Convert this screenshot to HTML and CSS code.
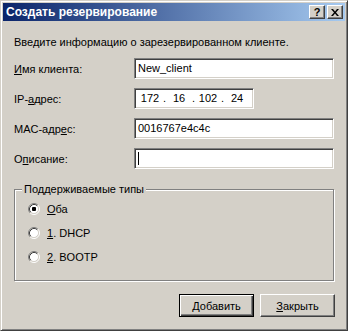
FILE: index.html
```html
<!DOCTYPE html>
<html lang="ru">
<head>
    <meta charset="UTF-8">
    <title>Создать резервирование</title>
    <link rel="stylesheet" href="styles.css">
</head>
<body>

    <div class="window">
        <div class="title-bar">
            <span class="title-text">Создать резервирование</span>
            <div class="caption-buttons">
                <button class="caption-btn help">?</button>
                <button class="caption-btn close">
                    <svg width="8" height="7" viewBox="0 0 8 7">
                        <path d="M0 0h2l2 2.5 2-2.5h2l-3 3.5 3 3.5h-2l-2-2.5-2 2.5h-2l3-3.5z" fill="#000"/>
                    </svg>
                </button>
            </div>
        </div>

        <div class="dialog-body">
            <p class="intro">Введите информацию о зарезервированном клиенте.</p>

            <div class="form-grid">
                <label class="field-label"><u>И</u>мя клиента:</label>
                <div class="text-input">New_client</div>

                <label class="field-label">IP-<u>а</u>дрес:</label>
                <div class="text-input ip-input">
                    <span class="octet">172</span><span class="dot">.</span>
                    <span class="octet">16</span><span class="dot">.</span>
                    <span class="octet">102</span><span class="dot">.</span>
                    <span class="octet">24</span>
                </div>

                <label class="field-label">MAC-адр<u>е</u>с:</label>
                <div class="text-input">0016767e4c4c</div>

                <label class="field-label">О<u>п</u>исание:</label>
                <div class="text-input"><span class="caret"></span></div>
            </div>

            <fieldset class="group-box">
                <legend>Поддерживаемые типы</legend>
                <div class="radio-row">
                    <svg class="radio" width="12" height="12" viewBox="0 0 12 12">
                        <circle cx="6" cy="6" r="4.5" fill="#fff"/>
                        <path d="M2.11 9.89A5.5 5.5 0 0 1 9.89 2.11" stroke="#808080" fill="none"/>
                        <path d="M9.89 2.11A5.5 5.5 0 0 1 2.11 9.89" stroke="#fff" fill="none"/>
                        <path d="M2.82 9.18A4.5 4.5 0 0 1 9.18 2.82" stroke="#404040" fill="none"/>
                        <path d="M9.18 2.82A4.5 4.5 0 0 1 2.82 9.18" stroke="#d4d0c8" fill="none"/>
                        <rect x="4" y="4" width="4" height="4" rx="1" fill="#000"/>
                    </svg>
                    <span><u>О</u>ба</span>
                </div>
                <div class="radio-row">
                    <svg class="radio" width="12" height="12" viewBox="0 0 12 12">
                        <circle cx="6" cy="6" r="4.5" fill="#fff"/>
                        <path d="M2.11 9.89A5.5 5.5 0 0 1 9.89 2.11" stroke="#808080" fill="none"/>
                        <path d="M9.89 2.11A5.5 5.5 0 0 1 2.11 9.89" stroke="#fff" fill="none"/>
                        <path d="M2.82 9.18A4.5 4.5 0 0 1 9.18 2.82" stroke="#404040" fill="none"/>
                        <path d="M9.18 2.82A4.5 4.5 0 0 1 2.82 9.18" stroke="#d4d0c8" fill="none"/>
                    </svg>
                    <span><u>1</u>. DHCP</span>
                </div>
                <div class="radio-row">
                    <svg class="radio" width="12" height="12" viewBox="0 0 12 12">
                        <circle cx="6" cy="6" r="4.5" fill="#fff"/>
                        <path d="M2.11 9.89A5.5 5.5 0 0 1 9.89 2.11" stroke="#808080" fill="none"/>
                        <path d="M9.89 2.11A5.5 5.5 0 0 1 2.11 9.89" stroke="#fff" fill="none"/>
                        <path d="M2.82 9.18A4.5 4.5 0 0 1 9.18 2.82" stroke="#404040" fill="none"/>
                        <path d="M9.18 2.82A4.5 4.5 0 0 1 2.82 9.18" stroke="#d4d0c8" fill="none"/>
                    </svg>
                    <span><u>2</u>. BOOTP</span>
                </div>
            </fieldset>

            <div class="button-row">
                <button class="push-btn default"><u>Д</u>обавить</button>
                <button class="push-btn"><u>З</u>акрыть</button>
            </div>
        </div>
    </div>

</body>
</html>
```

FILE: styles.css
```css
:root {
    --face: #d4d0c8;
    --shadow: #808080;
    --dark: #404040;
    --light: #ffffff;
    --text: #000000;
}

* {
    margin: 0;
    padding: 0;
    box-sizing: border-box;
}

body {
    background: var(--face);
    font-family: "Liberation Sans", Arial, sans-serif;
    font-size: 11px;
    line-height: 13px;
    color: var(--text);
}

u {
    text-decoration: underline;
    text-underline-offset: 1px;
}

.window {
    width: 348px;
    height: 331px;
    background: var(--face);
    border: 1px solid;
    border-color: var(--face) var(--dark) var(--dark) var(--face);
    box-shadow: inset 1px 1px 0 var(--light), inset -1px -1px 0 var(--shadow);
    padding: 2px;
}

.title-bar {
    height: 18px;
    display: flex;
    align-items: center;
    justify-content: space-between;
    padding: 0 2px 0 3px;
    background: linear-gradient(to right, #0a246a, #a6caf0);
}

.title-text {
    color: #fff;
    font-weight: bold;
    font-size: 12px;
}

.caption-buttons {
    display: flex;
    gap: 2px;
}

.caption-btn {
    width: 16px;
    height: 14px;
    display: flex;
    align-items: center;
    justify-content: center;
    background: var(--face);
    border: 1px solid;
    border-color: var(--light) var(--dark) var(--dark) var(--light);
    box-shadow: inset -1px -1px 0 var(--shadow);
    font-family: "Liberation Sans", Arial, sans-serif;
    font-weight: bold;
    font-size: 11px;
    line-height: 1;
}

.dialog-body {
    padding: 15px 11px 0 11px;
}

.intro {
    margin-bottom: 9px;
}

.form-grid {
    display: grid;
    grid-template-columns: 120px 200px;
    grid-auto-rows: 21px;
    row-gap: 9px;
    align-items: center;
}

.field-label {
    padding-top: 2px;
}

.text-input {
    height: 21px;
    background: #fff;
    border: 1px solid;
    border-color: var(--shadow) var(--light) var(--light) var(--shadow);
    box-shadow: inset 1px 1px 0 var(--dark), inset -1px -1px 0 var(--face);
    padding: 3px 3px 0 3px;
    white-space: nowrap;
}

.ip-input {
    width: 120px;
    display: flex;
    padding-left: 4px;
}

.octet {
    width: 22px;
    text-align: center;
}

.dot {
    width: 7px;
    text-align: center;
}

.caret {
    display: inline-block;
    width: 1px;
    height: 13px;
    background: #000;
    vertical-align: top;
}

.group-box {
    margin-top: 14px;
    width: 320px;
    height: 98px;
    border: 1px solid var(--shadow);
    box-shadow: inset 1px 1px 0 var(--light), 1px 1px 0 var(--light);
    padding: 0 0 0 13px;
}

.group-box legend {
    background: var(--face);
    padding: 0 2px 0 2px;
    margin-left: -6px;
}

.radio-row {
    height: 24px;
    display: flex;
    align-items: center;
    gap: 7px;
}

.radio-row:first-of-type {
    margin-top: 1px;
}

.button-row {
    display: flex;
    justify-content: flex-end;
    gap: 6px;
    margin-top: 13px;
    width: 321px;
}

.push-btn {
    width: 75px;
    height: 23px;
    background: var(--face);
    border: 1px solid;
    border-color: var(--light) var(--dark) var(--dark) var(--light);
    box-shadow: inset -1px -1px 0 var(--shadow), inset 1px 1px 0 var(--face);
    font-family: "Liberation Sans", Arial, sans-serif;
    font-size: 11px;
    color: var(--text);
}

.push-btn.default {
    border: 1px solid #000;
    box-shadow: inset 1px 1px 0 var(--light), inset -1px -1px 0 var(--dark), inset -2px -2px 0 var(--shadow);
}
```
